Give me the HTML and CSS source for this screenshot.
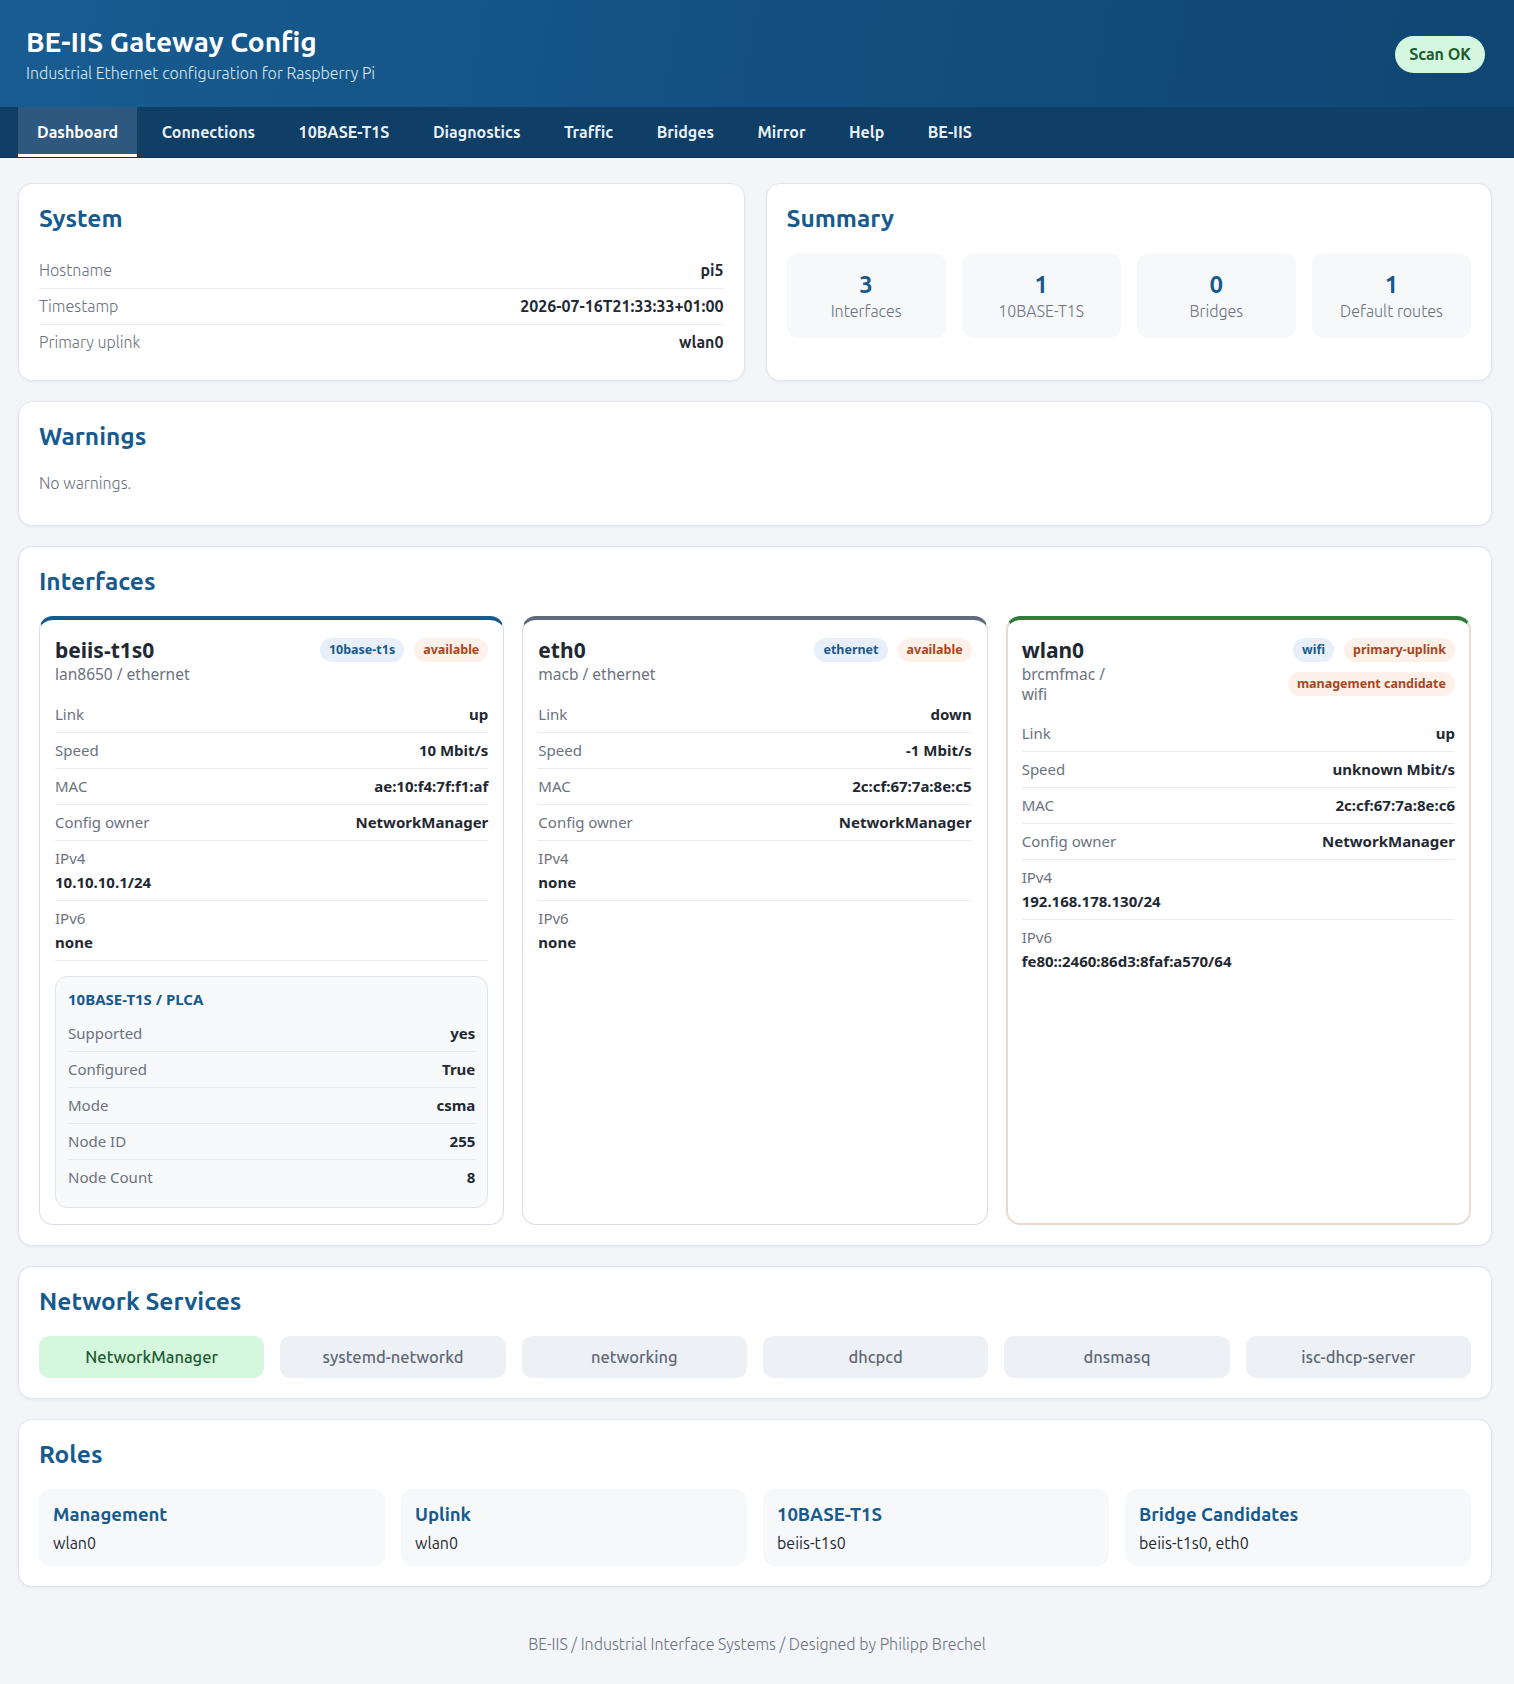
FILE: index.html
```html
<!doctype html>

<html lang="en">
<head>
  <meta charset="utf-8">
  <title>BE-IIS Gateway Config</title>
  <meta name="viewport" content="width=device-width, initial-scale=1.0">
  <link rel="stylesheet" href="styles.css">
</head>
<body>

  <header class="topbar">
    <div class="brand">
      <h1>BE-IIS Gateway Config</h1>
      <p>Industrial Ethernet configuration for Raspberry Pi</p>
    </div>
    <span class="status-pill">Scan OK</span>
  </header>

  <nav class="tabs">
    <a class="active" href="#">Dashboard</a>
    <a href="#">Connections</a>
    <a href="#">10BASE-T1S</a>
    <a href="#">Diagnostics</a>
    <a href="#">Traffic</a>
    <a href="#">Bridges</a>
    <a href="#">Mirror</a>
    <a href="#">Help</a>
    <a href="#">BE-IIS</a>
  </nav>

  <main>

    <div class="two-col">
      <section class="card">
        <h2>System</h2>
        <div class="row"><span>Hostname</span><strong>pi5</strong></div>
        <div class="row"><span>Timestamp</span><strong>2026-07-16T21:33:33+01:00</strong></div>
        <div class="row"><span>Primary uplink</span><strong>wlan0</strong></div>
      </section>

      <section class="card">
        <h2>Summary</h2>
        <div class="stats">
          <div class="stat"><b>3</b><span>Interfaces</span></div>
          <div class="stat"><b>1</b><span>10BASE-T1S</span></div>
          <div class="stat"><b>0</b><span>Bridges</span></div>
          <div class="stat"><b>1</b><span>Default routes</span></div>
        </div>
      </section>
    </div>

    <section class="card">
      <h2>Warnings</h2>
      <p class="empty">No warnings.</p>
    </section>

    <section class="card">
      <h2>Interfaces</h2>
      <div class="ifaces">

        <article class="iface t1s">
          <div class="iface-head">
            <div class="iface-name">
              <h3>beiis-t1s0</h3>
              <p>lan8650 / ethernet</p>
            </div>
            <div class="badges">
              <span class="badge blue">10base-t1s</span>
              <span class="badge orange">available</span>
            </div>
          </div>
          <div class="row"><span>Link</span><strong>up</strong></div>
          <div class="row"><span>Speed</span><strong>10 Mbit/s</strong></div>
          <div class="row"><span>MAC</span><strong>ae:10:f4:7f:f1:af</strong></div>
          <div class="row"><span>Config owner</span><strong>NetworkManager</strong></div>
          <div class="row stacked"><span>IPv4</span><strong>10.10.10.1/24</strong></div>
          <div class="row stacked"><span>IPv6</span><strong>none</strong></div>
          <div class="plca">
            <h4>10BASE-T1S / PLCA</h4>
            <div class="row"><span>Supported</span><strong>yes</strong></div>
            <div class="row"><span>Configured</span><strong>True</strong></div>
            <div class="row"><span>Mode</span><strong>csma</strong></div>
            <div class="row"><span>Node ID</span><strong>255</strong></div>
            <div class="row"><span>Node Count</span><strong>8</strong></div>
          </div>
        </article>

        <article class="iface eth">
          <div class="iface-head">
            <div class="iface-name">
              <h3>eth0</h3>
              <p>macb / ethernet</p>
            </div>
            <div class="badges">
              <span class="badge blue">ethernet</span>
              <span class="badge orange">available</span>
            </div>
          </div>
          <div class="row"><span>Link</span><strong>down</strong></div>
          <div class="row"><span>Speed</span><strong>-1 Mbit/s</strong></div>
          <div class="row"><span>MAC</span><strong>2c:cf:67:7a:8e:c5</strong></div>
          <div class="row"><span>Config owner</span><strong>NetworkManager</strong></div>
          <div class="row stacked"><span>IPv4</span><strong>none</strong></div>
          <div class="row stacked"><span>IPv6</span><strong>none</strong></div>
        </article>

        <article class="iface wifi">
          <div class="iface-head">
            <div class="iface-name">
              <h3>wlan0</h3>
              <p>brcmfmac / wifi</p>
            </div>
            <div class="badges">
              <span class="badge blue">wifi</span>
              <span class="badge orange">primary-uplink</span>
              <span class="badge orange">management candidate</span>
            </div>
          </div>
          <div class="row"><span>Link</span><strong>up</strong></div>
          <div class="row"><span>Speed</span><strong>unknown Mbit/s</strong></div>
          <div class="row"><span>MAC</span><strong>2c:cf:67:7a:8e:c6</strong></div>
          <div class="row"><span>Config owner</span><strong>NetworkManager</strong></div>
          <div class="row stacked"><span>IPv4</span><strong>192.168.178.130/24</strong></div>
          <div class="row stacked"><span>IPv6</span><strong>fe80::2460:86d3:8faf:a570/64</strong></div>
        </article>

      </div>
    </section>

    <section class="card">
      <h2>Network Services</h2>
      <div class="services">
        <span class="service on">NetworkManager</span>
        <span class="service">systemd-networkd</span>
        <span class="service">networking</span>
        <span class="service">dhcpcd</span>
        <span class="service">dnsmasq</span>
        <span class="service">isc-dhcp-server</span>
      </div>
    </section>

    <section class="card">
      <h2>Roles</h2>
      <div class="roles">
        <div class="role"><h4>Management</h4><p>wlan0</p></div>
        <div class="role"><h4>Uplink</h4><p>wlan0</p></div>
        <div class="role"><h4>10BASE-T1S</h4><p>beiis-t1s0</p></div>
        <div class="role"><h4>Bridge Candidates</h4><p>beiis-t1s0, eth0</p></div>
      </div>
    </section>

  </main>

  <footer>BE-IIS / Industrial Interface Systems / Designed by Philipp Brechel</footer>

</body>
</html>
```

FILE: styles.css
```css
/* Base */

body {
  margin: 0;
  background: #f3f5f8;
  color: #1f2933;
  font-family: Ubuntu, "Noto Sans", sans-serif;
  font-size: 16px;
}

h1, h2, h3, h4, p {
  margin: 0;
}

/* Header and tabs */

.topbar {
  display: flex;
  justify-content: space-between;
  align-items: center;
  padding: 25px 29px 23px 26px;
  background: linear-gradient(100deg, #185c91 0%, #134f80 55%, #0f4673 100%);
  color: #fff;
}

.brand h1 {
  font-size: 28px;
  line-height: 34px;
  font-weight: 700;
}

.brand p {
  margin-top: 3px;
  font-size: 16px;
  line-height: 22px;
  font-weight: 300;
  color: #dbe7f2;
}

.status-pill {
  background: #d5f7df;
  color: #1d5b30;
  font-weight: 700;
  font-size: 16px;
  line-height: 21px;
  padding: 8px 14px;
  border-radius: 999px;
}

.tabs {
  display: flex;
  gap: 5.5px;
  padding: 0 18px;
  height: 50px;
  background: #0f3e67;
  border-bottom: 1px solid #0b3256;
}

.tabs a {
  display: flex;
  align-items: center;
  padding: 3px 19px 0;
  color: #e8f0f7;
  font-weight: 700;
  font-size: 16px;
  text-decoration: none;
  border-bottom: 3px solid transparent;
}

.tabs a.active {
  background: #2e587f;
  border-bottom-color: #fff;
  color: #fff;
}

/* Cards */

main {
  padding: 25px 22px 0 18px;
  display: flex;
  flex-direction: column;
  gap: 20px;
}

.two-col {
  display: grid;
  grid-template-columns: 1fr 1fr;
  gap: 21px;
}

.card {
  background: #fff;
  border: 1px solid #e1e5ea;
  border-radius: 14px;
  padding: 20px;
  box-shadow: 0 1px 3px rgba(15, 40, 70, 0.06);
}

.card h2 {
  font-size: 24.5px;
  line-height: 29px;
  font-weight: 700;
  color: #175a8e;
  margin-bottom: 20px;
}

.row {
  display: flex;
  justify-content: space-between;
  align-items: center;
  gap: 12px;
  padding: 7px 0;
  line-height: 21px;
  border-bottom: 1px solid #e8ebef;
  font-size: 16px;
}

.row:last-child {
  border-bottom: none;
}

.row span {
  color: #6b7280;
  font-weight: 300;
}

.row strong {
  font-weight: 700;
  color: #1f2933;
}

.row.stacked {
  flex-direction: column;
  align-items: flex-start;
  gap: 3px;
}

.empty {
  color: #6b7280;
  font-weight: 300;
  font-size: 16px;
  line-height: 24px;
  margin-bottom: 10px;
}

/* Summary */

.stats {
  display: grid;
  grid-template-columns: repeat(4, 1fr);
  gap: 16px;
}

.stat {
  background: #f6f8fa;
  border-radius: 12px;
  padding: 16px 8px;
  text-align: center;
}

.stat b {
  display: block;
  font-size: 24px;
  line-height: 31px;
  color: #175a8e;
}

.stat span {
  display: block;
  font-size: 16px;
  line-height: 22px;
  color: #6b7280;
  font-weight: 300;
}

/* Interfaces */

.ifaces {
  display: grid;
  grid-template-columns: repeat(3, 1fr);
  gap: 18px;
}

.iface {
  font-family: "Noto Sans", sans-serif;
  border: 1px solid #d9dee4;
  border-top: 4px solid #175a8e;
  border-radius: 14px;
  padding: 16px 15px;
}

.iface.eth {
  border-top-color: #5f6b7a;
}

.iface.wifi {
  border: 2px solid #e8dbcf;
  border-top: 4px solid #2e7d3a;
  padding: 16px 14px;
}

.iface-head {
  display: flex;
  justify-content: space-between;
  align-items: flex-start;
  gap: 12px;
  margin-bottom: 12px;
}

.iface-name h3 {
  font-size: 21px;
  line-height: 29px;
  font-weight: 700;
  color: #1f2933;
}

.iface-name p {
  font-size: 15.5px;
  line-height: 19.5px;
  color: #6b7280;
}

.badges {
  display: flex;
  flex-wrap: wrap;
  justify-content: flex-end;
  gap: 10px;
  margin-top: 2px;
}

.badge {
  font-size: 12.5px;
  font-weight: 700;
  line-height: 24px;
  padding: 0 9px;
  border-radius: 999px;
  white-space: nowrap;
}

.badge.blue {
  background: #e7f0fa;
  color: #1a5a8f;
}

.badge.orange {
  background: #fdf1e9;
  color: #a9461d;
}

.iface .row {
  font-size: 15px;
}

.iface .row span {
  font-weight: 400;
}

.iface > .row:nth-last-child(2) {
  border-bottom: 1px solid #e8ebef;
}

.plca {
  margin-top: 15px;
  background: #f7f9fb;
  border: 1px solid #dfe4ea;
  border-radius: 12px;
  padding: 12px;
}

.plca h4 {
  font-size: 15px;
  line-height: 20px;
  color: #175a8e;
  margin-bottom: 7px;
}

/* Services */

.services {
  display: grid;
  grid-template-columns: repeat(6, 1fr);
  gap: 16px;
}

.service {
  background: #edf0f4;
  color: #5f6977;
  border-radius: 10px;
  text-align: center;
  font-weight: 500;
  font-size: 16.5px;
  line-height: 42px;
}

.service.on {
  background: #d4f7de;
  color: #1e5a2f;
}

/* Roles */

.roles {
  display: grid;
  grid-template-columns: repeat(4, 1fr);
  gap: 16px;
}

.role {
  background: #f6f8fa;
  border-radius: 12px;
  padding: 14px 14px 12px;
}

.role h4 {
  font-size: 18.5px;
  line-height: 23px;
  color: #175a8e;
  margin-bottom: 6px;
}

.role p {
  font-size: 16px;
  line-height: 22px;
  color: #1f2933;
}

footer {
  text-align: center;
  color: #6b7280;
  font-size: 16px;
  font-weight: 300;
  padding: 48px 0 28px;
}
```
